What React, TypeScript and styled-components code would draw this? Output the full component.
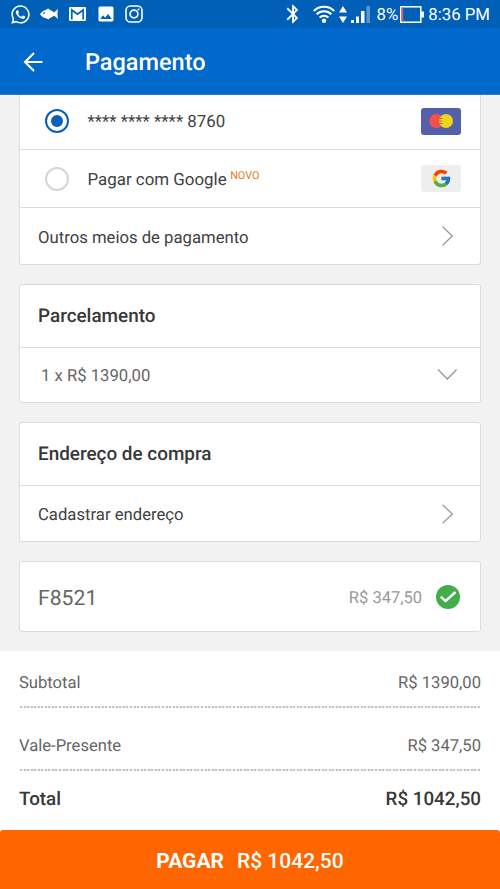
import React from 'react';
import styled, { createGlobalStyle } from 'styled-components';
import { FaWhatsapp } from 'react-icons/fa';
import { FcGoogle } from 'react-icons/fc';
import { MdBluetooth, MdImage } from 'react-icons/md';

const color = {
  status: '#0060b7',
  primary: '#0069cb',
  radio: '#0a5fb6',
  border: '#dcdcdc',
  background: '#f2f2f2',
  text: '#414141',
  darkText: '#383838',
  gray: '#666',
  lightGray: '#999',
  orange: '#ff6600',
  green: '#43ad4a',
};

const GlobalStyle = createGlobalStyle`
  * {
    box-sizing: border-box;
  }
  body {
    margin: 0;
    background: #fff;
    font-family: Roboto, 'Liberation Sans', sans-serif;
    color: ${color.text};
    text-rendering: geometricPrecision;
  }
  svg {
    display: block;
    flex-shrink: 0;
  }
`;

const Screen = styled.div`
  display: flex;
  flex-direction: column;
  width: 500px;
  height: 889px;
  overflow: hidden;
`;
const StatusBar = styled.div`
  display: flex;
  align-items: center;
  justify-content: space-between;
  height: 28px;
  padding: 0 10px;
  background: ${color.status};
  color: #fff;
`;
const StatusGroup = styled.div`
  display: flex;
  align-items: center;
`;
const StatusSlot = styled.span<{ gap: number }>`
  display: block;
  margin-left: ${(props) => props.gap}px;
`;
const StatusText = styled.span<{ gap: number }>`
  margin-left: ${(props) => props.gap}px;
  padding-top: 2px;
  font-size: 16.8px;
  line-height: 20px;
  white-space: nowrap;
`;
const Header = styled.header`
  display: flex;
  align-items: center;
  height: 67px;
  padding: 1px 23px 0;
  border-bottom: 1px solid #2a7cc8;
  background: ${color.primary};
  color: #fff;
`;
const BackButton = styled.button`
  padding: 0;
  border: 0;
  background: none;
  color: inherit;
`;
const Title = styled.h1`
  margin: 0 0 0 41px;
  font-size: 23.5px;
  font-weight: 500;
`;
const Content = styled.main`
  display: flex;
  flex-direction: column;
  gap: 19px;
  height: 556px;
  padding: 0 19px;
  background: ${color.background};
`;
const Card = styled.section<{ open?: boolean }>`
  border: 1px solid ${color.border};
  border-top-width: ${(props) => (props.open ? 0 : 1)}px;
  border-radius: ${(props) => (props.open ? '0 0 3px 3px' : '3px')};
  background: #fff;
`;
const Row = styled.div<{ height: number; indent?: number }>`
  display: flex;
  align-items: center;
  justify-content: space-between;
  height: ${(props) => props.height}px;
  padding: 0 19px 0 ${(props) => props.indent || 18}px;
  font-size: 16.7px;

  & + & {
    border-top: 1px solid ${color.border};
  }
  &:first-child:not(:last-child) {
    padding-bottom: 2px;
  }
`;
const RowLabel = styled.span<{ muted?: boolean }>`
  padding-top: ${(props) => (props.muted ? 2 : 4)}px;
  color: ${(props) => (props.muted ? color.gray : color.text)};
`;
const CardTitle = styled.h2`
  margin: 1px 0 0;
  font-size: 18.9px;
  font-weight: 500;
  color: ${color.darkText};
`;
const Option = styled.label`
  display: flex;
  align-items: center;
  font-size: 16.9px;
`;
const OptionLabel = styled.span`
  padding-top: 2px;
`;
const Radio = styled.span<{ checked?: boolean }>`
  display: flex;
  align-items: center;
  justify-content: center;
  width: 24px;
  height: 24px;
  margin: 0 19px 0 6.5px;
  border: 2px solid ${(props) => (props.checked ? color.radio : '#d5d5d5')};
  border-radius: 50%;

  &::after {
    content: '';
    width: 12px;
    height: 12px;
    border-radius: 50%;
    background: ${(props) => (props.checked ? color.radio : 'transparent')};
  }
`;
const NewTag = styled.span`
  margin: -7px 0 0 3.5px;
  font-size: 10.8px;
  color: #e07a1f;
`;
const Brand = styled.span<{ bg: string }>`
  display: flex;
  align-items: center;
  justify-content: center;
  width: 40px;
  height: 27px;
  border-radius: 3px;
  background: ${(props) => props.bg};
`;
const GiftCode = styled.span`
  padding-top: 3px;
  font-size: 21.2px;
  color: ${color.gray};
`;
const GiftValue = styled.span`
  display: flex;
  align-items: center;
  gap: 14px;
  font-size: 16.5px;
  color: ${color.lightGray};
`;
const GiftAmount = styled.span`
  padding-top: 3px;
`;
const Summary = styled.section`
  height: 179px;
  padding: 8px 19px 0;
  background: #fff;
`;
const SummaryRow = styled.div<{
  height: number;
  space?: number;
  strong?: boolean;
}>`
  display: flex;
  align-items: center;
  justify-content: space-between;
  height: ${(props) => props.height}px;
  margin-top: ${(props) => props.space || 0}px;
  padding-top: ${(props) => (props.strong ? 0 : 1)}px;
  font-size: ${(props) => (props.strong ? 18.8 : 16.6)}px;
  font-weight: ${(props) => (props.strong ? 500 : 400)};
  color: ${(props) => (props.strong ? color.darkText : color.gray)};
`;
const Dots = styled.div`
  height: 2px;
  margin: 0 1px;
  background: repeating-linear-gradient(
    90deg,
    #c2c2c2 0 2px,
    #f2f2f2 2px 3.55px
  );
`;
const PayButton = styled.button`
  display: flex;
  align-items: center;
  justify-content: center;
  gap: 13px;
  height: 59px;
  padding: 2px 0 0;
  border: 0;
  border-radius: 3px 3px 0 0;
  background: ${color.orange};
  color: #fff;
  font-family: inherit;
  font-size: 21px;
  font-weight: 500;
`;
const PayAction = styled.span`
  font-weight: 700;
`;

const FishIcon = () => (
  <svg width="18" height="12" viewBox="0 0 18 12" fill="#fff">
    <path d="M0 6.2C1.8 3.6 4 2.1 6.2 1.7L8 .4c1 .3 1.5.9 2 1.6 1.6.5 2.8 1.4 4 2.6L18 1c-.7 3.5-.7 6.5 0 10l-4-3.4c-1.2 1.2-2.4 2-4 2.5l-1.6 1.4-1.6-1.1C4.2 10.1 1.8 9 0 6.2Z" />
    <circle cx="4" cy="5.2" r=".9" fill={color.status} />
  </svg>
);

const GmailIcon = () => (
  <svg width="17" height="14" viewBox="0 0 17 14">
    <rect width="17" height="14" rx="1.3" fill="#fff" />
    <path
      d="M2.8 12.5V3l5.7 4.3L14.2 3v9.5"
      fill="none"
      stroke={color.status}
      strokeWidth="1.7"
    />
  </svg>
);

const InstagramIcon = () => (
  <svg width="18" height="18" viewBox="0 0 18 18" fill="none" stroke="#fff">
    <rect x="1" y="1" width="16" height="16" rx="4.5" strokeWidth="1.6" />
    <circle cx="9" cy="9" r="3.9" strokeWidth="1.7" />
    <circle cx="13.5" cy="4.5" r="1" fill="#fff" stroke="none" />
  </svg>
);

const WifiIcon = () => (
  <svg width="22" height="18" viewBox="0 0 22 18" fill="none" stroke="#fff">
    <path d="M.8 6a14.5 14.5 0 0 1 20.4 0" strokeWidth="2" />
    <path d="M3.7 9.3a10.3 10.3 0 0 1 14.6 0" strokeWidth="2" />
    <path d="M6.6 12.5a6.2 6.2 0 0 1 8.8 0" strokeWidth="2" />
    <circle cx="11" cy="15.7" r="2.2" fill="#fff" stroke="none" />
  </svg>
);

const TrafficIcon = () => (
  <svg width="8" height="17" viewBox="0 0 8 17" fill="#fff">
    <path d="M4 0l4 6.5H0zM4 17l4-6.5H0z" />
  </svg>
);

const SignalIcon = () => (
  <svg width="19" height="17" viewBox="0 0 19 17" fill="#fff">
    <path d="M0 14h3v3H0zM5 10.5h3V17H5zM10 5h3.5v12H10z" />
    <path d="M15.5 0H19v17h-3.5z" opacity=".35" />
  </svg>
);

const BatteryIcon = () => (
  <svg width="24" height="17" viewBox="0 0 24 17">
    <rect
      x=".8"
      y=".8"
      width="20"
      height="15.4"
      fill="none"
      stroke="#fff"
      strokeWidth="1.5"
    />
    <path d="M1.5 1.5h1.8v14H1.5z" fill="#d9555f" />
    <path d="M21 5.5h3v6h-3z" fill="#fff" />
  </svg>
);

const BackIcon = () => (
  <svg width="21" height="20" viewBox="0 0 21 20" fill="none" stroke="#fff">
    <path d="M11 1L2 10l9 9M2 10h17.5" strokeWidth="2.1" />
  </svg>
);

const MastercardIcon = () => (
  <svg width="24" height="14" viewBox="0 0 24 14">
    <circle cx="7.2" cy="7" r="7" fill="#f0524b" />
    <circle cx="17" cy="7" r="7" fill="#ecd71c" />
    <path
      d="M10 4.5h3.5M9.6 7h3.5M10 9.5h3.5"
      stroke="#f0524b"
      strokeWidth="1.2"
    />
  </svg>
);

const Chevron = ({ down }: { down?: boolean }) =>
  down ? (
    <svg width="28" height="20" viewBox="0 0 28 20" fill="none">
      <path d="M5 4.5l9.3 9.5 9.3-9.5" stroke="#999" strokeWidth="1.3" />
    </svg>
  ) : (
    <svg width="28" height="20" viewBox="0 0 28 20" fill="none">
      <path d="M9.6.8l9.7 9.2-9.7 9.2" stroke="#999" strokeWidth="1.3" />
    </svg>
  );

const CheckIcon = () => (
  <svg width="25" height="24" viewBox="0 0 25 24" fill="none">
    <circle cx="12" cy="12" r="12" fill={color.green} />
    <path d="M4.8 11.6l4.7 4.5L19.5 7" stroke="#fff" strokeWidth="2.5" />
  </svg>
);

const App = () => {
  return (
    <Screen>
      <GlobalStyle />
      <StatusBar>
        <StatusGroup>
          <StatusSlot gap={0}>
            <FaWhatsapp size={21} />
          </StatusSlot>
          <StatusSlot gap={9}>
            <FishIcon />
          </StatusSlot>
          <StatusSlot gap={11}>
            <GmailIcon />
          </StatusSlot>
          <StatusSlot gap={10}>
            <MdImage size={20} />
          </StatusSlot>
          <StatusSlot gap={9}>
            <InstagramIcon />
          </StatusSlot>
        </StatusGroup>
        <StatusGroup>
          <StatusSlot gap={0}>
            <MdBluetooth size={22} />
          </StatusSlot>
          <StatusSlot gap={9}>
            <WifiIcon />
          </StatusSlot>
          <StatusSlot gap={4}>
            <TrafficIcon />
          </StatusSlot>
          <StatusSlot gap={4}>
            <SignalIcon />
          </StatusSlot>
          <StatusText gap={7}>8%</StatusText>
          <StatusSlot gap={2}>
            <BatteryIcon />
          </StatusSlot>
          <StatusText gap={4}>8:36 PM</StatusText>
        </StatusGroup>
      </StatusBar>
      <Header>
        <BackButton>
          <BackIcon />
        </BackButton>
        <Title>Pagamento</Title>
      </Header>
      <Content>
        <Card open>
          <Row height={54}>
            <Option>
              <Radio checked />
              <OptionLabel>**** **** **** 8760</OptionLabel>
            </Option>
            <Brand bg="#5560ad">
              <MastercardIcon />
            </Brand>
          </Row>
          <Row height={58}>
            <Option>
              <Radio />
              <OptionLabel>Pagar com Google</OptionLabel>
              <NewTag>NOVO</NewTag>
            </Option>
            <Brand bg="#eee">
              <FcGoogle size={21} />
            </Brand>
          </Row>
          <Row height={57}>
            <RowLabel>Outros meios de pagamento</RowLabel>
            <Chevron />
          </Row>
        </Card>
        <Card>
          <Row height={62}>
            <CardTitle>Parcelamento</CardTitle>
          </Row>
          <Row height={55} indent={21}>
            <RowLabel muted>1 x R$ 1390,00</RowLabel>
            <Chevron down />
          </Row>
        </Card>
        <Card>
          <Row height={62}>
            <CardTitle>Endereço de compra</CardTitle>
          </Row>
          <Row height={56}>
            <RowLabel>Cadastrar endereço</RowLabel>
            <Chevron />
          </Row>
        </Card>
        <Card>
          <Row height={69}>
            <GiftCode>F8521</GiftCode>
            <GiftValue>
              <GiftAmount>R$ 347,50</GiftAmount>
              <CheckIcon />
            </GiftValue>
          </Row>
        </Card>
      </Content>
      <Summary>
        <SummaryRow height={47}>
          <span>Subtotal</span>
          <span>R$ 1390,00</span>
        </SummaryRow>
        <Dots />
        <SummaryRow height={46} space={15}>
          <span>Vale-Presente</span>
          <span>R$ 347,50</span>
        </SummaryRow>
        <Dots />
        <SummaryRow height={55} strong>
          <span>Total</span>
          <span>R$ 1042,50</span>
        </SummaryRow>
      </Summary>
      <PayButton>
        <PayAction>PAGAR</PayAction>
        <span>R$ 1042,50</span>
      </PayButton>
    </Screen>
  );
};
export default App;
